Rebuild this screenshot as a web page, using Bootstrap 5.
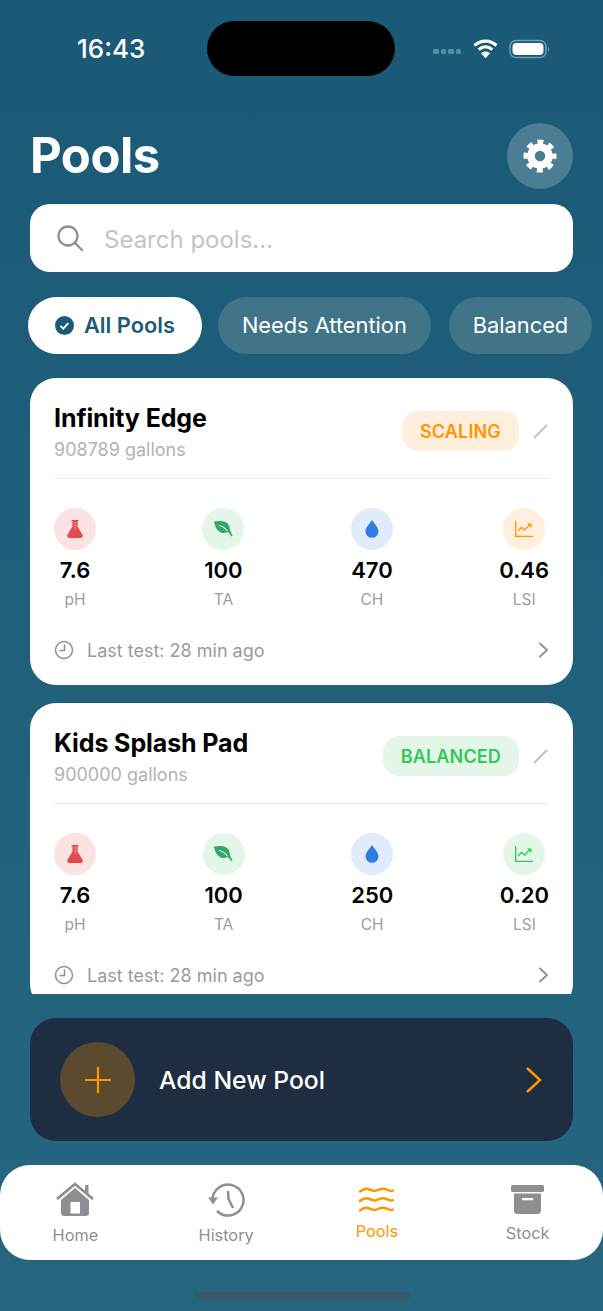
<!DOCTYPE html>
<html lang="en">
<head>
  <meta charset="UTF-8" />
  <meta name="viewport" content="width=device-width, initial-scale=1.0"/>
  <title>Pools</title>
  <link href="https://cdn.jsdelivr.net/npm/bootstrap@5.3.3/dist/css/bootstrap.min.css" rel="stylesheet">
  <style>
    html, body { height: 100%; }
    body {
      margin: 0;
      font-family: "Inter", "Liberation Sans", sans-serif;
      background: linear-gradient(180deg, #1b5a77 0%, #26667f 100%);
      overflow: hidden;
    }
    .phone { width: 603px; height: 1311px; overflow: hidden; }

    .status-row { height: 55px; margin-top: 21px; padding: 0 52px 0 77px; }
    .status-time { width: 130px; font-size: 26px; font-weight: 500; color: #fff; line-height: 55px; }
    .island { width: 188px; height: 55px; background: #000; border-radius: 28px; }
    .status-dots { gap: 2px; margin-right: 12px; margin-top: 6px; }
    .status-dots i { width: 5.5px; height: 5.5px; border-radius: 1.5px; background: #5a8ba1; display: block; }
    .status-wifi { margin-right: 11px; }

    .title-row { padding: 47px 30px 0; height: 113px; }
    .page-title { font-size: 49px; font-weight: 700; color: #fff; margin: 0; line-height: 66px; letter-spacing: -0.5px; }
    .gear-btn { width: 66px; height: 66px; background: #4b7d94; }

    .search-box { margin: 15px 30px 0; height: 68px; background: #fff; border-radius: 20px; padding: 0 26px; gap: 20px; }
    .search-box input { font-size: 24px; padding: 4px 0 0; color: #333; font-family: inherit; }
    .search-box input::placeholder { color: #c4c4c6; }

    .chip-row { padding: 25px 0 0 28px; gap: 18px; white-space: nowrap; }
    .chip { height: 57px; font-size: 21.8px; font-weight: 400; padding: 0 24px; color: #fff; background: #3f7489; flex: none; }
    .chip-active { background: #fff; color: #1c5b78; font-weight: 600; padding: 0 27px; gap: 10px; margin-right: -2px; }

    .pool-list { margin: 24px 30px 0; height: 616px; overflow: hidden; gap: 18px; }
    .pool-card { border-radius: 26px; flex: none; height: 307px; padding: 0 24px; }
    .pool-head { height: 101px; border-bottom: 1px solid #e8e8ea; padding-top: 23px; }
    .pool-name { font-size: 25px; font-weight: 700; color: #000; line-height: 35px; margin: 0; letter-spacing: -0.1px; }
    .pool-size { font-size: 18px; color: #b2b2b5; line-height: 28px; }
    .state-tag { height: 40px; border-radius: 16px; font-size: 18px; font-weight: 600; letter-spacing: 0.15px; padding: 0 18px; margin: 10px 14px 0 0; }
    .state-warn { background: #ffefdc; color: #ff9500; }
    .state-good { background: #e3f6e8; color: #34c759; }
    .edit-mark { margin-top: 23px; margin-right: 1px; }

    .metric-row { padding-top: 29px; }
    .metric-cell { text-align: center; }
    .metric-dot { width: 42px; height: 42px; margin: 0 auto; }
    .dot-red { background: #fbe3e3; }
    .dot-green { background: #e3f6e8; }
    .dot-blue { background: #e0ebfb; }
    .dot-orange { background: #ffefdc; }
    .metric-val { font-size: 22px; font-weight: 600; color: #000; line-height: 28px; margin-top: 6px; }
    .metric-name { font-size: 15.5px; color: #9c9ca0; line-height: 20px; margin-top: 6px; }

    .test-row { margin-top: 25px; height: 30px; }
    .test-text { font-size: 18px; color: #9a9a9e; margin-left: 13px; }

    .add-pool { margin: 24px 30px 0; height: 123px; background: #1f2d42; border-radius: 26px; padding: 0 31px 0 30px; }
    .add-dot { width: 75px; height: 75px; background: #5c4a2f; }
    .add-text { font-size: 24.7px; font-weight: 500; color: #fff; margin-left: 24px; padding-top: 2px; }

    .tab-strip { margin-top: 24px; height: 95px; background: #fff; border-radius: 30px; }
    .tab-item { width: 25%; text-align: center; font-size: 16.3px; color: #8e8e93; }
    .tab-item svg { display: block; margin: 0 auto; }
    .tab-on { color: #ff9500; }
    .tab-home { padding-top: 17px; }
    .tab-hist { padding-top: 18px; }
    .tab-pool { padding-top: 22px; }
    .tab-stock { padding-top: 20px; }
    .tab-home div, .tab-stock div { margin-top: 7px; }
    .tab-hist div, .tab-pool div { margin-top: 6px; }

    .home-bar { width: 216px; height: 7px; background: #3a5866; border-radius: 4px; margin: 32px auto 0; }
  </style>
</head>
<body>
<div class="phone">

  <div class="status-row d-flex align-items-center">
    <div class="status-time">16:43</div>
    <div class="island"></div>
    <div class="ms-auto d-flex align-items-center">
      <div class="status-dots d-flex"><i></i><i></i><i></i><i></i></div>
      <svg class="status-wifi" width="25" height="20" viewBox="0 0 25 20">
        <path d="M1.500 6.500C8 .6 17 .6 23.500 6.500" fill="none" stroke="#fff" stroke-width="3.200"/>
        <path d="M5.700 10.600C9.800 7 15.200 7 19.300 10.600" fill="none" stroke="#fff" stroke-width="3.200"/>
        <path d="M8 14.200c2.800-2.300 6.200-2.300 9 0l-4.500 5z" fill="#fff"/>
      </svg>
      <svg width="42" height="20" viewBox="0 0 42 20">
        <rect x="1" y="1.500" width="36" height="17" rx="6" fill="none" stroke="#6f9bae" stroke-width="1.500"/>
        <rect x="3.500" y="4" width="31" height="12" rx="4" fill="#fff"/>
        <path d="M39 7.500c1.500.5 1.500 4.500 0 5z" fill="#6f9bae"/>
      </svg>
    </div>
  </div>

  <div class="title-row d-flex justify-content-between align-items-start">
    <h1 class="page-title">Pools</h1>
    <div class="gear-btn rounded-circle d-flex align-items-center justify-content-center">
      <svg width="34" height="34" viewBox="0 0 34 34">
        <circle cx="17" cy="17" r="9" fill="none" stroke="#fff" stroke-width="7.500"/>
        <circle cx="17" cy="17" r="13.500" fill="none" stroke="#fff" stroke-width="6" stroke-dasharray="5.600 5" stroke-dashoffset="2.800"/>
      </svg>
    </div>
  </div>

  <div class="search-box d-flex align-items-center">
    <svg width="28" height="28" viewBox="0 0 28 28" class="flex-shrink-0" fill="none" stroke="#8e8e93" stroke-width="2.300" stroke-linecap="round">
      <circle cx="12" cy="12" r="9.500"/>
      <path d="M19 19l7 7"/>
    </svg>
    <input type="text" class="form-control border-0 shadow-none bg-transparent" placeholder="Search pools...">
  </div>

  <div class="chip-row d-flex">
    <div class="chip chip-active rounded-pill d-flex align-items-center">
      <svg width="19" height="19" viewBox="0 0 19 19">
        <circle cx="9.500" cy="9.500" r="9.500" fill="#1c5b78"/>
        <path d="M5.500 9.800l2.800 2.800 5-5.400" fill="none" stroke="#fff" stroke-width="1.800"/>
      </svg>
      All Pools
    </div>
    <div class="chip rounded-pill d-flex align-items-center">Needs Attention</div>
    <div class="chip rounded-pill d-flex align-items-center">Balanced</div>
  </div>

  <div class="pool-list d-flex flex-column">

    <div class="card pool-card border-0">
      <div class="pool-head d-flex align-items-start">
        <div class="flex-grow-1">
          <h2 class="pool-name">Infinity Edge</h2>
          <div class="pool-size">908789 gallons</div>
        </div>
        <div class="state-tag state-warn d-flex align-items-center">SCALING</div>
        <svg class="edit-mark" width="15" height="15" viewBox="0 0 15 15"><path d="M1 14L14 1" stroke="#c2c2c4" stroke-width="2"/></svg>
      </div>
      <div class="metric-row d-flex justify-content-between">
        <div class="metric-cell">
          <div class="metric-dot dot-red rounded-circle d-flex align-items-center justify-content-center">
            <svg width="16" height="18" viewBox="0 0 16 18"><path d="M4.500 0h7v1.200h-1v5.300l5 8.200c.8 1.400-.1 3.300-1.800 3.300H2.300C.6 18-.3 16.100.5 14.700l5-8.200V1.200h-1z" fill="#e5484d"/><path d="M7.500 3h1.500M7.500 5.500h1.500M7.500 8h1.500" stroke="#fbe3e3" stroke-width=".9"/></svg>
          </div>
          <div class="metric-val">7.6</div>
          <div class="metric-name">pH</div>
        </div>
        <div class="metric-cell">
          <div class="metric-dot dot-green rounded-circle d-flex align-items-center justify-content-center">
            <svg width="19" height="16" viewBox="0 0 19 16"><path d="M0 .5c6-1 14.500-1 15.500 6 .3 2 .8 4 3 8l-1 1c-1.500-2.500-2.600-3.500-3.800-4.500C9 13.500 2 12 0 .5z" fill="#34a866"/><path d="M5 4.500c3 .5 6 2.500 8.500 5.500" fill="none" stroke="#e3f6e8" stroke-width="1.100"/></svg>
          </div>
          <div class="metric-val">100</div>
          <div class="metric-name">TA</div>
        </div>
        <div class="metric-cell">
          <div class="metric-dot dot-blue rounded-circle d-flex align-items-center justify-content-center">
            <svg width="14" height="18" viewBox="0 0 14 18"><path d="M7 0c2.500 4 6.500 7.500 6.500 11.300A6.500 6.500 0 0 1 .5 11.300C.5 7.500 4.500 4 7 0z" fill="#2f7de1"/></svg>
          </div>
          <div class="metric-val">470</div>
          <div class="metric-name">CH</div>
        </div>
        <div class="metric-cell">
          <div class="metric-dot dot-orange rounded-circle d-flex align-items-center justify-content-center">
            <svg width="18" height="16" viewBox="0 0 18 16" fill="none" stroke="#ff9500" stroke-width="1.300"><path d="M.7 0v15.300H18"/><path d="M3 10l3.500-3.500 3 2.500 5-5"/><path d="M12 2.500h4.500v4.500z" fill="#ff9500" stroke="none"/></svg>
          </div>
          <div class="metric-val">0.46</div>
          <div class="metric-name">LSI</div>
        </div>
      </div>
      <div class="test-row d-flex align-items-center">
        <svg width="20" height="20" viewBox="0 0 20 20" fill="none" stroke="#8e8e93" stroke-width="1.500"><circle cx="10" cy="10" r="8.500"/><path d="M10.500 4.500v6H5.500"/></svg>
        <span class="test-text flex-grow-1">Last test: 28 min ago</span>
        <svg width="11" height="16" viewBox="0 0 11 16" fill="none" stroke="#8e8e93" stroke-width="1.800"><path d="M1.500 1l7.500 7-7.500 7"/></svg>
      </div>
    </div>

    <div class="card pool-card border-0">
      <div class="pool-head d-flex align-items-start">
        <div class="flex-grow-1">
          <h2 class="pool-name">Kids Splash Pad</h2>
          <div class="pool-size">900000 gallons</div>
        </div>
        <div class="state-tag state-good d-flex align-items-center">BALANCED</div>
        <svg class="edit-mark" width="15" height="15" viewBox="0 0 15 15"><path d="M1 14L14 1" stroke="#c2c2c4" stroke-width="2"/></svg>
      </div>
      <div class="metric-row d-flex justify-content-between">
        <div class="metric-cell">
          <div class="metric-dot dot-red rounded-circle d-flex align-items-center justify-content-center">
            <svg width="16" height="18" viewBox="0 0 16 18"><path d="M4.500 0h7v1.200h-1v5.300l5 8.200c.8 1.400-.1 3.300-1.800 3.300H2.300C.6 18-.3 16.100.5 14.700l5-8.200V1.200h-1z" fill="#e5484d"/><path d="M7.500 3h1.500M7.500 5.500h1.500M7.500 8h1.500" stroke="#fbe3e3" stroke-width=".9"/></svg>
          </div>
          <div class="metric-val">7.6</div>
          <div class="metric-name">pH</div>
        </div>
        <div class="metric-cell">
          <div class="metric-dot dot-green rounded-circle d-flex align-items-center justify-content-center">
            <svg width="19" height="16" viewBox="0 0 19 16"><path d="M0 .5c6-1 14.500-1 15.500 6 .3 2 .8 4 3 8l-1 1c-1.500-2.500-2.600-3.500-3.800-4.500C9 13.500 2 12 0 .5z" fill="#34a866"/><path d="M5 4.500c3 .5 6 2.500 8.500 5.500" fill="none" stroke="#e3f6e8" stroke-width="1.100"/></svg>
          </div>
          <div class="metric-val">100</div>
          <div class="metric-name">TA</div>
        </div>
        <div class="metric-cell">
          <div class="metric-dot dot-blue rounded-circle d-flex align-items-center justify-content-center">
            <svg width="14" height="18" viewBox="0 0 14 18"><path d="M7 0c2.500 4 6.500 7.500 6.500 11.300A6.500 6.500 0 0 1 .5 11.300C.5 7.500 4.500 4 7 0z" fill="#2f7de1"/></svg>
          </div>
          <div class="metric-val">250</div>
          <div class="metric-name">CH</div>
        </div>
        <div class="metric-cell">
          <div class="metric-dot dot-green rounded-circle d-flex align-items-center justify-content-center">
            <svg width="18" height="16" viewBox="0 0 18 16" fill="none" stroke="#34c759" stroke-width="1.300"><path d="M.7 0v15.300H18"/><path d="M3 10l3.500-3.500 3 2.500 5-5"/><path d="M12 2.500h4.500v4.500z" fill="#34c759" stroke="none"/></svg>
          </div>
          <div class="metric-val">0.20</div>
          <div class="metric-name">LSI</div>
        </div>
      </div>
      <div class="test-row d-flex align-items-center">
        <svg width="20" height="20" viewBox="0 0 20 20" fill="none" stroke="#8e8e93" stroke-width="1.500"><circle cx="10" cy="10" r="8.500"/><path d="M10.500 4.500v6H5.500"/></svg>
        <span class="test-text flex-grow-1">Last test: 28 min ago</span>
        <svg width="11" height="16" viewBox="0 0 11 16" fill="none" stroke="#8e8e93" stroke-width="1.800"><path d="M1.500 1l7.500 7-7.500 7"/></svg>
      </div>
    </div>

  </div>

  <div class="add-pool d-flex align-items-center">
    <div class="add-dot rounded-circle d-flex align-items-center justify-content-center">
      <svg width="28" height="28" viewBox="0 0 28 28"><path d="M14 1v26M1 14h26" stroke="#ff9500" stroke-width="2.200"/></svg>
    </div>
    <div class="add-text flex-grow-1">Add New Pool</div>
    <svg width="17" height="28" viewBox="0 0 17 28" fill="none" stroke="#ff9500" stroke-width="2.500"><path d="M2 2l13 12L2 26"/></svg>
  </div>

  <div class="tab-strip d-flex">
    <div class="tab-item tab-home">
      <svg width="38" height="34" viewBox="0 0 38 34" fill="#8e8e93">
        <path d="M1 17L19 2l18 15" fill="none" stroke="#8e8e93" stroke-width="2.800"/>
        <rect x="29" y="3" width="3.500" height="9"/>
        <path fill-rule="evenodd" d="M5 18L19 6l14 12v13c0 1.700-1 3-3 3H8c-2 0-3-1.300-3-3zM14.500 20v11.500h9.500V20z"/>
      </svg>
      <div>Home</div>
    </div>
    <div class="tab-item tab-hist">
      <svg width="37" height="34" viewBox="0 0 37 34" fill="none" stroke="#8e8e93" stroke-width="2.500">
        <path d="M4.500 17A15.500 15.500 0 1 1 9 28"/>
        <path d="M0 14.500h10l-5 7z" fill="#8e8e93" stroke="none"/>
        <path d="M20 8l.5 8L25 25"/>
      </svg>
      <div>History</div>
    </div>
    <div class="tab-item tab-pool tab-on">
      <svg width="35" height="26" viewBox="0 0 35 26" fill="none" stroke="#ff9500" stroke-width="2.500" stroke-linecap="round">
        <path d="M1 4.500C4 2 6 .8 9 2s5.500 3 8.500 1.500S23 1 26 2s5 3 8 1.500"/>
        <path d="M1 14C4 11.500 6 10.300 9 11.500s5.500 3 8.500 1.500 5.500-2.500 8.500-1.500 5 3 8 1.500"/>
        <path d="M1 23.500C4 21 6 19.800 9 21s5.500 3 8.500 1.500 5.500-2.500 8.500-1.500 5 3 8 1.500"/>
      </svg>
      <div>Pools</div>
    </div>
    <div class="tab-item tab-stock">
      <svg width="33" height="29" viewBox="0 0 33 29" fill="#8e8e93">
        <rect x="0" y="0" width="33" height="7" rx="1.500"/>
        <path fill-rule="evenodd" d="M3 8.500h27v17c0 2-1.300 3.500-3.300 3.500H6.300C4.300 29 3 27.500 3 25.500zM11 13v2.200h11V13z"/>
      </svg>
      <div>Stock</div>
    </div>
  </div>

  <div class="home-bar"></div>
</div>
</body>
</html>
